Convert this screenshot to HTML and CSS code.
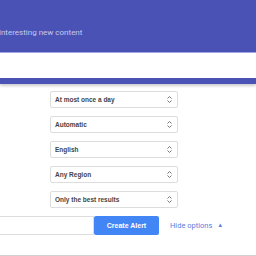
FILE: index.html
```html
<!DOCTYPE html>
<html lang="en">
<head>
  <meta charset="UTF-8">
  <title>Alerts</title>
  <link rel="stylesheet" href="styles.css">
</head>
<body>
  <div class="header">
    <div class="tagline">interesting new content</div>
  </div>
  <div class="search-band"></div>
  <div class="header-foot"></div>

  <div class="options">
    <div class="select-row">
      <div class="select"><span>At most once a day</span><svg width="5" height="7" viewBox="0 0 5 7"><path d="M0.5 2.5 L2.5 0.5 L4.5 2.5 M0.5 4.5 L2.5 6.5 L4.5 4.5" fill="none" stroke="#777" stroke-width="1"/></svg></div>
    </div>
    <div class="select-row">
      <div class="select"><span>Automatic</span><svg width="5" height="7" viewBox="0 0 5 7"><path d="M0.5 2.5 L2.5 0.5 L4.5 2.5 M0.5 4.5 L2.5 6.5 L4.5 4.5" fill="none" stroke="#777" stroke-width="1"/></svg></div>
    </div>
    <div class="select-row">
      <div class="select"><span>English</span><svg width="5" height="7" viewBox="0 0 5 7"><path d="M0.5 2.5 L2.5 0.5 L4.5 2.5 M0.5 4.5 L2.5 6.5 L4.5 4.5" fill="none" stroke="#777" stroke-width="1"/></svg></div>
    </div>
    <div class="select-row">
      <div class="select"><span>Any Region</span><svg width="5" height="7" viewBox="0 0 5 7"><path d="M0.5 2.5 L2.5 0.5 L4.5 2.5 M0.5 4.5 L2.5 6.5 L4.5 4.5" fill="none" stroke="#777" stroke-width="1"/></svg></div>
    </div>
    <div class="select-row">
      <div class="select"><span>Only the best results</span><svg width="5" height="7" viewBox="0 0 5 7"><path d="M0.5 2.5 L2.5 0.5 L4.5 2.5 M0.5 4.5 L2.5 6.5 L4.5 4.5" fill="none" stroke="#777" stroke-width="1"/></svg></div>
    </div>
  </div>

  <div class="actions">
    <div class="email"></div>
    <button class="create">Create Alert</button>
    <a class="hide">Hide options <span class="caret">&#9650;</span></a>
  </div>

  <div class="footer-line"></div>
</body>
</html>
```

FILE: styles.css
```css
body {
  margin: 0;
  font-family: 'Liberation Sans', Arial, sans-serif;
  background: #fff;
  overflow: hidden;
}
.header {
  height: 52px;
  background: #4a52b5;
}
.tagline {
  padding-top: 28px;
  margin-left: -1px;
  font-family: Roboto, sans-serif;
  font-size: 8px;
  color: #c5c9ec;
  white-space: nowrap;
}
.search-band {
  height: 25px;
  background: #fff;
  border-top: 1px solid #9fa6e0;
}
.header-foot {
  height: 6px;
  background: #4a52b5;
  box-shadow: 0 2px 3px rgba(0, 0, 0, 0.2);
}
.options {
  padding-top: 7px;
  padding-left: 50px;
}
.select-row {
  margin-bottom: 8px;
}
.select {
  height: 15px;
  border: 1px solid #ddd;
  border-radius: 2px;
  display: flex;
  align-items: center;
  justify-content: space-between;
  padding: 0 5px 0 4px;
  box-sizing: content-box;
  width: 117px;
  font-size: 6.5px;
  font-weight: bold;
  color: #444;
}
.select svg {
  display: block;
}
.actions {
  display: flex;
  align-items: center;
  margin-top: 2px;
  height: 19px;
}
.email {
  width: 93px;
  height: 17px;
  border: 1px solid #ddd;
  border-left: none;
  box-sizing: content-box;
}
.create {
  width: 65px;
  height: 19px;
  background: #4285f4;
  color: #fff;
  border: none;
  border-radius: 2px;
  font-family: 'Liberation Sans', Arial, sans-serif;
  font-size: 7px;
  font-weight: bold;
  padding: 0;
}
.hide {
  margin-left: 11px;
  font-family: Roboto, sans-serif;
  font-size: 7.5px;
  color: #5b80e2;
}
.caret {
  font-size: 6px;
  margin-left: 3px;
  vertical-align: 1px;
}
.footer-line {
  margin-top: 20px;
  height: 4px;
  background: #eee;
  border-top: 1px solid #d0d0d0;
}
```
